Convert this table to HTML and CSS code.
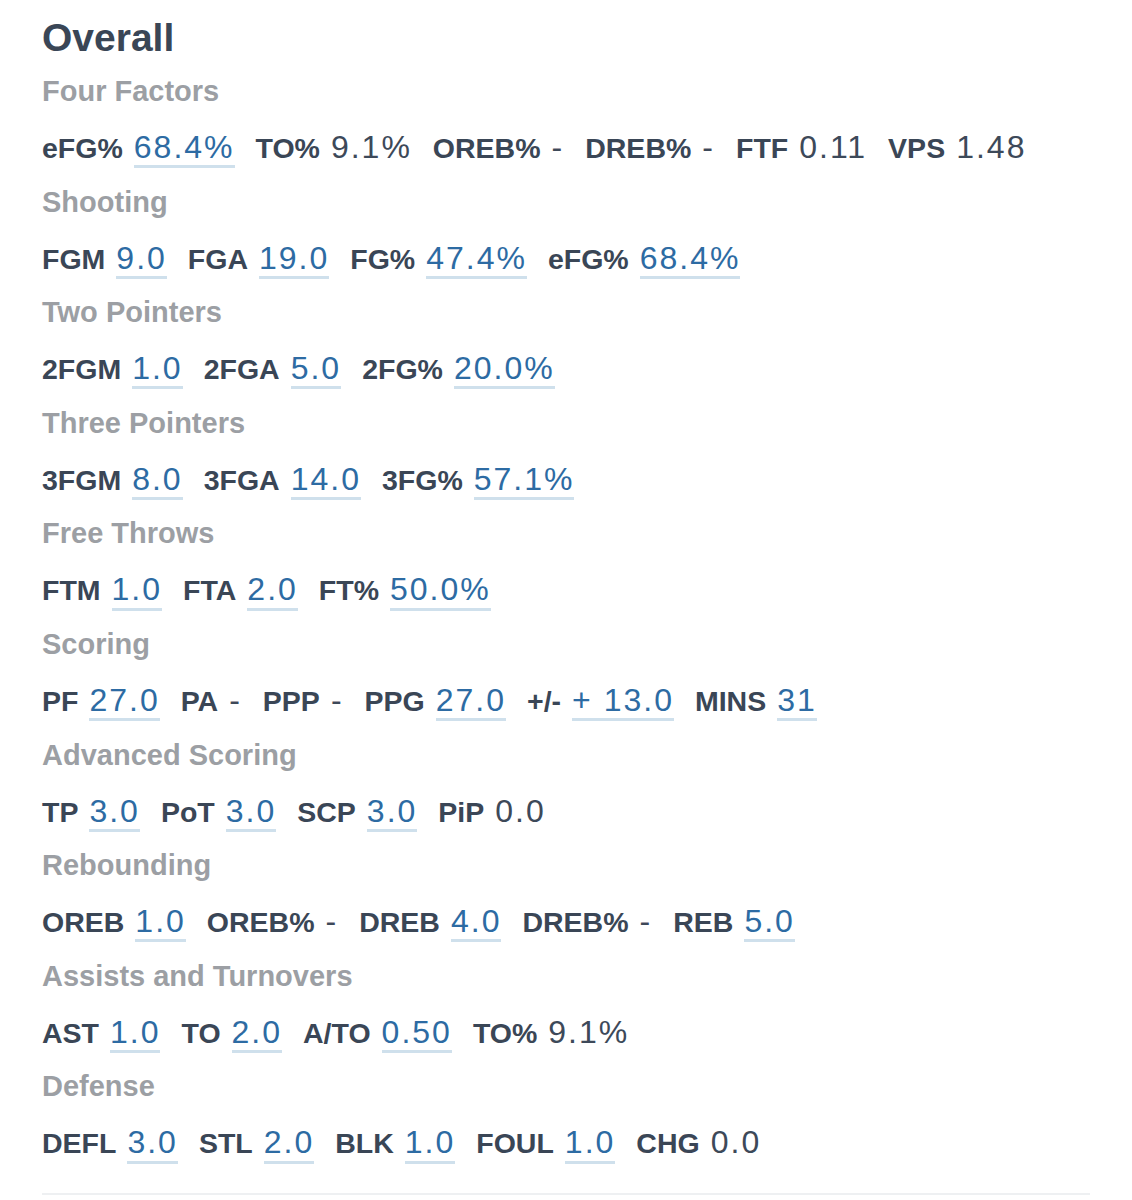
FILE: index.html
```html
<!DOCTYPE html>
<html>
<head>
<meta charset="utf-8">
<link rel="stylesheet" href="styles.css">
</head>
<body>
<div class="panel">
  <h1 class="title">Overall</h1>

  <section class="group">
    <h2 class="heading">Four Factors</h2>
    <div class="stats">
      <span class="stat"><span class="label">eFG%</span><span class="value link">68.4%</span></span>
      <span class="stat"><span class="label">TO%</span><span class="value">9.1%</span></span>
      <span class="stat"><span class="label">OREB%</span><span class="value">-</span></span>
      <span class="stat"><span class="label">DREB%</span><span class="value">-</span></span>
      <span class="stat"><span class="label">FTF</span><span class="value">0.11</span></span>
      <span class="stat"><span class="label">VPS</span><span class="value">1.48</span></span>
    </div>
  </section>

  <section class="group">
    <h2 class="heading">Shooting</h2>
    <div class="stats">
      <span class="stat"><span class="label">FGM</span><span class="value link">9.0</span></span>
      <span class="stat"><span class="label">FGA</span><span class="value link">19.0</span></span>
      <span class="stat"><span class="label">FG%</span><span class="value link">47.4%</span></span>
      <span class="stat"><span class="label">eFG%</span><span class="value link">68.4%</span></span>
    </div>
  </section>

  <section class="group">
    <h2 class="heading">Two Pointers</h2>
    <div class="stats">
      <span class="stat"><span class="label">2FGM</span><span class="value link">1.0</span></span>
      <span class="stat"><span class="label">2FGA</span><span class="value link">5.0</span></span>
      <span class="stat"><span class="label">2FG%</span><span class="value link">20.0%</span></span>
    </div>
  </section>

  <section class="group">
    <h2 class="heading">Three Pointers</h2>
    <div class="stats">
      <span class="stat"><span class="label">3FGM</span><span class="value link">8.0</span></span>
      <span class="stat"><span class="label">3FGA</span><span class="value link">14.0</span></span>
      <span class="stat"><span class="label">3FG%</span><span class="value link">57.1%</span></span>
    </div>
  </section>

  <section class="group">
    <h2 class="heading">Free Throws</h2>
    <div class="stats">
      <span class="stat"><span class="label">FTM</span><span class="value link">1.0</span></span>
      <span class="stat"><span class="label">FTA</span><span class="value link">2.0</span></span>
      <span class="stat"><span class="label">FT%</span><span class="value link">50.0%</span></span>
    </div>
  </section>

  <section class="group">
    <h2 class="heading">Scoring</h2>
    <div class="stats">
      <span class="stat"><span class="label">PF</span><span class="value link">27.0</span></span>
      <span class="stat"><span class="label">PA</span><span class="value">-</span></span>
      <span class="stat"><span class="label">PPP</span><span class="value">-</span></span>
      <span class="stat"><span class="label">PPG</span><span class="value link">27.0</span></span>
      <span class="stat"><span class="label">+/-</span><span class="value link">+ 13.0</span></span>
      <span class="stat"><span class="label">MINS</span><span class="value link">31</span></span>
    </div>
  </section>

  <section class="group">
    <h2 class="heading">Advanced Scoring</h2>
    <div class="stats">
      <span class="stat"><span class="label">TP</span><span class="value link">3.0</span></span>
      <span class="stat"><span class="label">PoT</span><span class="value link">3.0</span></span>
      <span class="stat"><span class="label">SCP</span><span class="value link">3.0</span></span>
      <span class="stat"><span class="label">PiP</span><span class="value">0.0</span></span>
    </div>
  </section>

  <section class="group">
    <h2 class="heading">Rebounding</h2>
    <div class="stats">
      <span class="stat"><span class="label">OREB</span><span class="value link">1.0</span></span>
      <span class="stat"><span class="label">OREB%</span><span class="value">-</span></span>
      <span class="stat"><span class="label">DREB</span><span class="value link">4.0</span></span>
      <span class="stat"><span class="label">DREB%</span><span class="value">-</span></span>
      <span class="stat"><span class="label">REB</span><span class="value link">5.0</span></span>
    </div>
  </section>

  <section class="group">
    <h2 class="heading">Assists and Turnovers</h2>
    <div class="stats">
      <span class="stat"><span class="label">AST</span><span class="value link">1.0</span></span>
      <span class="stat"><span class="label">TO</span><span class="value link">2.0</span></span>
      <span class="stat"><span class="label">A/TO</span><span class="value link">0.50</span></span>
      <span class="stat"><span class="label">TO%</span><span class="value">9.1%</span></span>
    </div>
  </section>

  <section class="group">
    <h2 class="heading">Defense</h2>
    <div class="stats">
      <span class="stat"><span class="label">DEFL</span><span class="value link">3.0</span></span>
      <span class="stat"><span class="label">STL</span><span class="value link">2.0</span></span>
      <span class="stat"><span class="label">BLK</span><span class="value link">1.0</span></span>
      <span class="stat"><span class="label">FOUL</span><span class="value link">1.0</span></span>
      <span class="stat"><span class="label">CHG</span><span class="value">0.0</span></span>
    </div>
  </section>

  <div class="divider"></div>
</div>
</body>
</html>
```

FILE: styles.css
```css
html, body {
  margin: 0;
  padding: 0;
  background: #ffffff;
}

body {
  font-family: "Liberation Sans", Arial, Helvetica, sans-serif;
  color: #3b4757;
}

.panel {
  padding: 12px 42px 0 42px;
}

.title {
  margin: 0;
  font-size: 39px;
  font-weight: bold;
  line-height: 52px;
  color: #3a4656;
}

.group {
  display: flex;
  flex-direction: column;
}

.heading {
  margin: 0;
  font-size: 29px;
  font-weight: bold;
  color: #9c9fa4;
  line-height: 54px;
  height: 54px;
}

.stats {
  box-sizing: border-box;
  display: flex;
  align-items: baseline;
  gap: 21px;
  padding-top: 1px;
  height: 56.6px;
  line-height: 58.6px;
}

.stat {
  display: inline-flex;
  align-items: baseline;
  gap: 11px;
}

.label {
  font-size: 28.5px;
  font-weight: bold;
  color: #3a4656;
}

.value {
  font-size: 32px;
  letter-spacing: 2px;
  color: #3d4959;
  line-height: 1.1;
}

.value.link {
  color: #2d6ba3;
  border-bottom: 3px solid #cfe0ec;
}

.divider {
  margin-top: 23px;
  height: 2px;
  background: #eef0f2;
  width: 1048px;
}
```
